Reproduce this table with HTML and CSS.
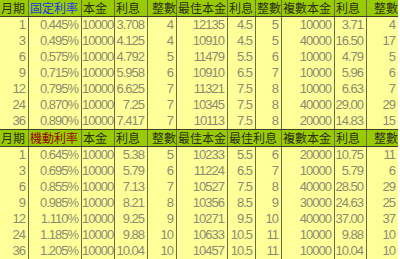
FILE: index.html
```html
<!DOCTYPE html>
<html>
<head>
<meta charset="utf-8">
<link rel="stylesheet" href="styles.css">
</head>
<body>
<div class="sheet">
<div class="row head"><span class="l">月期</span><span class="l fixed">固定利率</span><span class="l">本金</span><span class="l">利息</span><span>整數</span><span class="l">最佳本金</span><span class="l">利息</span><span>整數</span><span class="l">複數本金</span><span class="l">利息</span><span>整數</span></div>
<div class="row"><span>1</span><span>0.445%</span><span>10000</span><span>3.708</span><span>4</span><span>12135</span><span>4.5</span><span>5</span><span>10000</span><span>3.71</span><span>4</span></div>
<div class="row"><span>3</span><span>0.495%</span><span>10000</span><span>4.125</span><span>4</span><span>10910</span><span>4.5</span><span>5</span><span>40000</span><span>16.50</span><span>17</span></div>
<div class="row"><span>6</span><span>0.575%</span><span>10000</span><span>4.792</span><span>5</span><span>11479</span><span>5.5</span><span>6</span><span>10000</span><span>4.79</span><span>5</span></div>
<div class="row"><span>9</span><span>0.715%</span><span>10000</span><span>5.958</span><span>6</span><span>10910</span><span>6.5</span><span>7</span><span>10000</span><span>5.96</span><span>6</span></div>
<div class="row"><span>12</span><span>0.795%</span><span>10000</span><span>6.625</span><span>7</span><span>11321</span><span>7.5</span><span>8</span><span>10000</span><span>6.63</span><span>7</span></div>
<div class="row"><span>24</span><span>0.870%</span><span>10000</span><span>7.25</span><span>7</span><span>10345</span><span>7.5</span><span>8</span><span>40000</span><span>29.00</span><span>29</span></div>
<div class="row last"><span>36</span><span>0.890%</span><span>10000</span><span>7.417</span><span>7</span><span>10113</span><span>7.5</span><span>8</span><span>20000</span><span>14.83</span><span>15</span></div>
<div class="row head"><span class="l">月期</span><span class="l float">機動利率</span><span class="l">本金</span><span class="l">利息</span><span>整數</span><span class="l">最佳本金</span><span class="l span2">最佳利息</span><span class="l">複數本金</span><span class="l">利息</span><span>整數</span></div>
<div class="row"><span>1</span><span>0.645%</span><span>10000</span><span>5.38</span><span>5</span><span>10233</span><span>5.5</span><span>6</span><span>20000</span><span>10.75</span><span>11</span></div>
<div class="row"><span>3</span><span>0.695%</span><span>10000</span><span>5.79</span><span>6</span><span>11224</span><span>6.5</span><span>7</span><span>10000</span><span>5.79</span><span>6</span></div>
<div class="row"><span>6</span><span>0.855%</span><span>10000</span><span>7.13</span><span>7</span><span>10527</span><span>7.5</span><span>8</span><span>40000</span><span>28.50</span><span>29</span></div>
<div class="row"><span>9</span><span>0.985%</span><span>10000</span><span>8.21</span><span>8</span><span>10356</span><span>8.5</span><span>9</span><span>30000</span><span>24.63</span><span>25</span></div>
<div class="row"><span>12</span><span>1.110%</span><span>10000</span><span>9.25</span><span>9</span><span>10271</span><span>9.5</span><span>10</span><span>40000</span><span>37.00</span><span>37</span></div>
<div class="row"><span>24</span><span>1.185%</span><span>10000</span><span>9.88</span><span>10</span><span>10633</span><span>10.5</span><span>11</span><span>10000</span><span>9.88</span><span>10</span></div>
<div class="row last"><span>36</span><span>1.205%</span><span>10000</span><span>10.04</span><span>10</span><span>10457</span><span>10.5</span><span>11</span><span>10000</span><span>10.04</span><span>10</span></div>
</div>
</body>
</html>
```

FILE: styles.css
```css
html, body {
  margin: 0;
  padding: 0;
  background: #ffffff;
}
.sheet {
  width: 398px;
  background: #ffff99;
}
.row {
  display: grid;
  grid-template-columns: 28px 52px 32px 32px 28px 50px 27px 25px 52px 31px 31px;
  column-gap: 1px;
  background: #6b6b40;
  height: 16px;
}
.row > span {
  background: #ffff99;
  white-space: nowrap;
  overflow: visible;
  text-align: right;
  padding-right: 3px;
  font-family: "Liberation Sans", Arial, sans-serif;
  font-size: 13px;
  letter-spacing: -1px;
  line-height: 16px;
  color: #8c8c70;
}
.row.head {
  height: 17px;
  border-bottom: 1px solid #40402a;
  box-sizing: border-box;
}
.row.head > span {
  background: #99cc00;
  color: #2e2e20;
  font-family: "Noto Sans CJK TC", "Noto Sans CJK SC", sans-serif;
  font-size: 12px;
  letter-spacing: 0;
  padding-right: 0;
  line-height: 16px;
}
.row.head > span.l {
  text-align: left;
  padding-left: 1px;
}
.row.head > span.span2 {
  grid-column: span 2;
}
.row.head > .fixed { color: #2233ee; }
.row.head > .float { color: #990000; }
.row.last {
  height: 17px;
  border-bottom: 1px solid #40402a;
  box-sizing: border-box;
}
```
